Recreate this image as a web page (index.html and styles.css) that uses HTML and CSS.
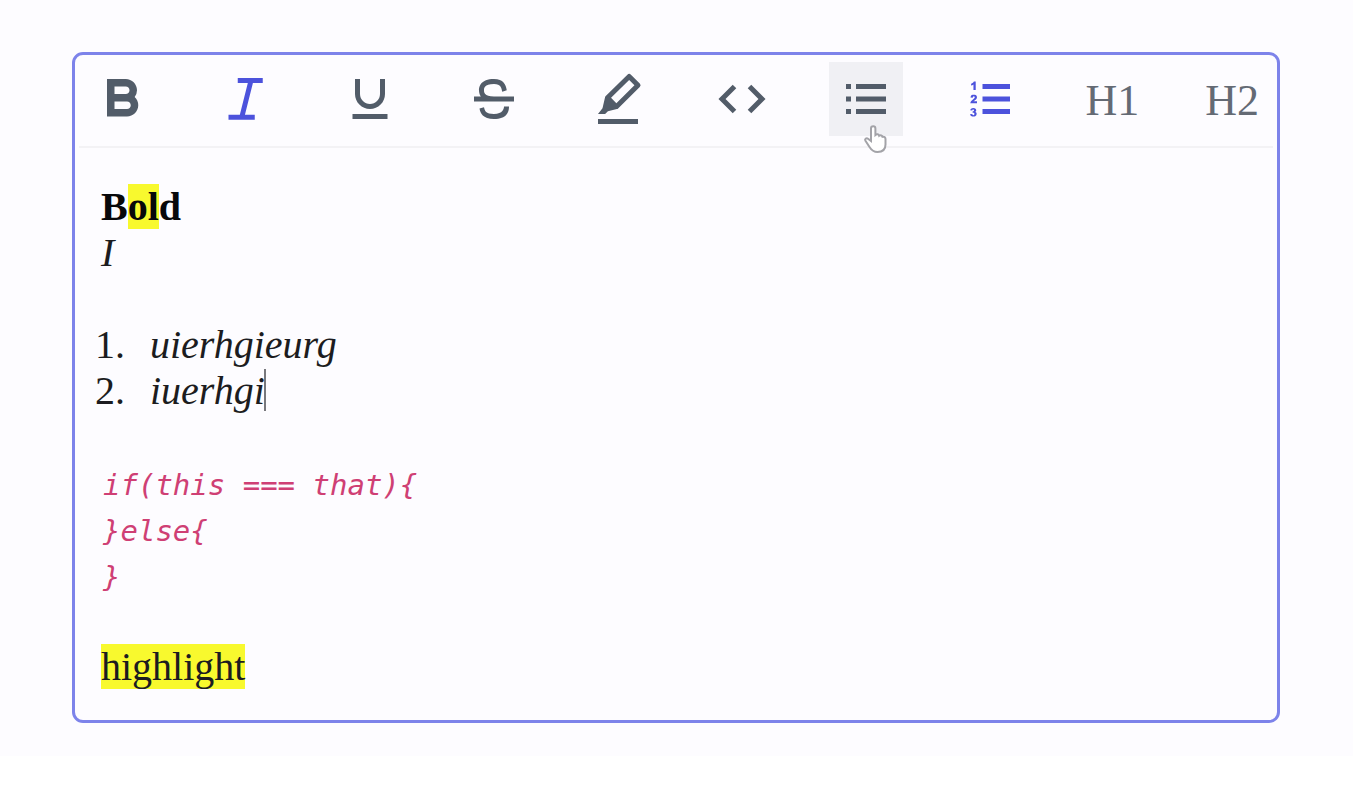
FILE: index.html
```
<!DOCTYPE html>
<html lang="en">
<head>
<meta charset="utf-8">
<title>Text editor</title>
<link rel="stylesheet" href="styles.css">
</head>
<body>
<main class="page">
  <section class="editor">
    <div class="toolbar" role="toolbar" aria-label="Formatting">
      <button class="tool" type="button" aria-label="Bold"><svg viewBox="0 0 24 24"><path d="M17.061 11.22A4.46 4.46 0 0 0 18 8.5C18 6.019 15.981 4 13.5 4H6v15h8c2.481 0 4.5-2.019 4.5-4.5a4.48 4.48 0 0 0-1.439-3.28zM13.5 7c.827 0 1.5.673 1.5 1.5s-.673 1.5-1.5 1.5H9V7h4.5zm.5 9H9v-3h5c.827 0 1.5.673 1.5 1.5S14.827 16 14 16z"/></svg></button>
      <button class="tool tool-active" type="button" aria-label="Italic" aria-pressed="true"><svg viewBox="0 0 24 24"><path d="M8.700 4.600h10M5 19.300h10.500M14 4.600l-3.700 14.700" fill="none" stroke="currentColor" stroke-width="2"/></svg></button>
      <button class="tool" type="button" aria-label="Underline"><svg viewBox="0 0 24 24"><path d="M5 18h14v2H5zM6 4v6c0 3.309 2.691 6 6 6s6-2.691 6-6V4h-2v6c0 2.206-1.794 4-4 4s-4-1.794-4-4V4H6z"/></svg></button>
      <button class="tool" type="button" aria-label="Strikethrough"><svg viewBox="0 0 24 24"><path d="M20 11h-8c-4 0-4-1.816-4-2.500C8 7.882 8 6 12 6c2.800 0 2.990 1.678 3.300 3.100L17.100 8.500C16.700 6.200 15.800 4 12 4c-5.416 0-6 3.147-6 4.500 0 .728.148 1.667.736 2.500H4v2h16v-2zm-8 7c-3.300 0-3.700-1.300-4-2.700L6.200 15.800C6.500 17.600 7.500 20 12 20c5.221 0 6-2.819 6-5h-2c0 .838-.42 3-4 3z"/></svg></button>
      <button class="tool" type="button" aria-label="Highlight"><svg viewBox="0 0 24 24"><path d="M20.707 5.826l-3.535-3.533a.999.999 0 0 0-1.408-.006L7.096 10.82a1.010 1.010 0 0 0-.273.488l-1.024 4.437L4 18h2.828l1.142-1.129 3.588-.828c.18-.042.345-.133.477-.262l8.667-8.535a1 1 0 0 0 .005-1.420zm-9.369 7.833-2.121-2.120 7.243-7.131 2.120 2.120-7.242 7.131zM4 20h16v2H4z"/></svg></button>
      <button class="tool" type="button" aria-label="Code"><svg viewBox="0 0 24 24"><path d="M8.293 6.293 2.586 12l5.707 5.707 1.414-1.414L5.414 12l4.293-4.293zm7.414 11.414L21.414 12l-5.707-5.707-1.414 1.414L18.586 12l-4.293 4.293z"/></svg></button>
      <button class="tool tool-hover" type="button" aria-label="Bulleted list"><svg viewBox="0 0 24 24"><path d="M4 6h2v2H4zm0 5h2v2H4zm0 5h2v2H4zM8 6h12v2H8zm0 5h12v2H8zm0 5h12v2H8z"/></svg>
        <svg class="pointer" viewBox="0 0 24 30"><path d="M8 17V4.500a2.200 2.200 0 0 1 4.400 0V11c1.500-1.300 3.400-.8 3.800.8 1.300-.9 3-.3 3.300 1 1.700-.5 3 .5 3 2.300v5.400c0 5-2.600 7.500-8 7.500-4 0-6-1.800-8-5l-4.200-6.500c-.8-1.500 1.200-3 2.700-1.800z"/></svg>
      </button>
      <button class="tool tool-active" type="button" aria-label="Numbered list" aria-pressed="true"><svg viewBox="0 0 24 24"><path d="M5.282 12.064c-.428.328-.72.609-.875.851-.155.24-.249.498-.279.768h2.679v-.748H5.413c.081-.081.152-.151.212-.201.062-.05.182-.142.361-.27.303-.218.511-.42.626-.604.116-.186.173-.375.173-.578a.898.898 0 0 0-.151-.512.892.892 0 0 0-.412-.341c-.174-.076-.419-.111-.733-.111-.3 0-.537.038-.706.114a.889.889 0 0 0-.396.338c-.094.143-.159.346-.194.604l.894.076c.025-.188.074-.317.147-.394a.375.375 0 0 1 .279-.108c.11 0 .2.035.272.108a.344.344 0 0 1 .108.258.55.55 0 0 1-.108.297c-.074.102-.241.254-.503.453zm.055 6.386a.398.398 0 0 1-.282-.105c-.074-.07-.128-.195-.162-.378L4 18.085c.059.204.142.372.251.506.109.133.248.235.417.306.168.069.399.103.692.103.3 0 .541-.047.725-.14a1 1 0 0 0 .424-.403c.098-.175.146-.354.146-.544a.823.823 0 0 0-.088-.393.708.708 0 0 0-.249-.261 1.015 1.015 0 0 0-.286-.11.943.943 0 0 0 .345-.299.673.673 0 0 0 .113-.383.747.747 0 0 0-.281-.596c-.187-.159-.49-.238-.909-.238-.365 0-.648.072-.847.219-.2.143-.334.353-.404.626l.844.151c.023-.162.067-.274.133-.338s.151-.098.257-.098a.33.33 0 0 1 .241.089c.059.06.087.139.087.238 0 .104-.038.193-.117.27s-.177.112-.293.112a.907.907 0 0 1-.116-.011l-.045.649a1.130 1.130 0 0 1 .289-.056c.132 0 .237.041.313.126.077.082.115.199.115.352 0 .146-.04.266-.119.354a.394.394 0 0 1-.301.134zm.948-10.083V5h-.739a1.470 1.470 0 0 1-.394.523c-.168.142-.404.262-.708.365v.754a2.595 2.595 0 0 0 .937-.48v2.206h.904zM9 6h11v2H9zm0 5h11v2H9zm0 5h11v2H9z"/></svg></button>
      <button class="tool tool-text" type="button">H1</button>
      <button class="tool tool-text" type="button">H2</button>
    </div>
    <div class="content" contenteditable="true" role="textbox" aria-multiline="true" aria-label="Document" spellcheck="false">
      <p><strong>B<mark>ol</mark>d</strong></p>
      <p><em>I</em></p>
      <p><br></p>
      <ol>
        <li><em>uierhgieurg</em></li>
        <li><em>iuerhgi</em><span class="caret"></span></li>
      </ol>
      <p><br></p>
      <pre><code>if(this === that){
}else{
}</code></pre>
      <p><br></p>
      <p><mark>highlight</mark></p>
    </div>
  </section>
</main>
</body>
</html>
```
FILE: styles.css
```
* {
  box-sizing: border-box;
}

body {
  margin: 0;
  background: #fff;
  font-family: "Liberation Serif", "Times New Roman", serif;
}

.page {
  padding: 52px 73px 33px 72px;
  background: #fdfcff;
}

.editor {
  border: 3px solid #7d83ea;
  border-radius: 11px;
}

.toolbar {
  display: flex;
  justify-content: space-between;
  margin: 0 4px;
  padding: 7px 6px 10px 6px;
  border-bottom: 2px solid #f3f2f5;
}

.tool {
  position: relative;
  padding: 7px;
  border: 0;
  background: none;
  color: #525c69;
}

.tool svg {
  display: block;
  width: 60px;
  height: 60px;
  fill: currentColor;
}

.tool-active {
  color: #4c52dc;
}

.tool-hover {
  background: #f0f0f4;
}

.tool-text {
  padding: 2px 8px 0;
  font: 44px "Liberation Serif", "Times New Roman", serif;
  color: #646a74;
}

.tool .pointer {
  position: absolute;
  left: 34px;
  top: 62px;
  width: 24px;
  height: 30px;
  fill: #fff;
  stroke: #a3a3a8;
  stroke-width: 2;
}

.content {
  padding: 36px 26px 30px;
  font-size: 40px;
  line-height: 46px;
  color: #1c1c20;
  outline: none;
}

.content p,
.content ol,
.content pre {
  margin: 0;
}

.content strong {
  color: #08080a;
}

.content ol {
  padding-left: 34px;
}

.content li em {
  padding-left: 15px;
}

.content mark {
  background: #f8f92e;
  color: inherit;
}

.content pre {
  margin-bottom: -2px;
  padding: 2px 0 0 2px;
  font-size: 29px;
}

.content pre,
.content code {
  font-family: "DejaVu Sans Mono", monospace;
}

.content code {
  font-style: italic;
  color: #cf3f74;
}

.caret {
  display: inline-block;
  width: 2px;
  height: 42px;
  margin-left: -1px;
  vertical-align: -7px;
  background: #77777c;
}
```
